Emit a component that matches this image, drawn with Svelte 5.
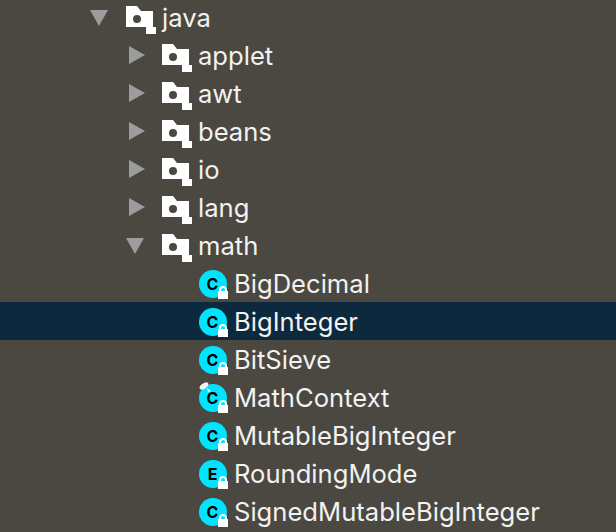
<script>
	const rows = [
		{ name: 'java', depth: 0, kind: 'folder', arrow: 'open' },
		{ name: 'applet', depth: 1, kind: 'folder', arrow: 'closed' },
		{ name: 'awt', depth: 1, kind: 'folder', arrow: 'closed' },
		{ name: 'beans', depth: 1, kind: 'folder', arrow: 'closed' },
		{ name: 'io', depth: 1, kind: 'folder', arrow: 'closed' },
		{ name: 'lang', depth: 1, kind: 'folder', arrow: 'closed' },
		{ name: 'math', depth: 1, kind: 'folder', arrow: 'open' },
		{ name: 'BigDecimal', depth: 2, kind: 'class', letter: 'C' },
		{ name: 'BigInteger', depth: 2, kind: 'class', letter: 'C', selected: true },
		{ name: 'BitSieve', depth: 2, kind: 'class', letter: 'C' },
		{ name: 'MathContext', depth: 2, kind: 'class', letter: 'C', pinned: true },
		{ name: 'MutableBigInteger', depth: 2, kind: 'class', letter: 'C' },
		{ name: 'RoundingMode', depth: 2, kind: 'class', letter: 'E' },
		{ name: 'SignedMutableBigInteger', depth: 2, kind: 'class', letter: 'C' }
	];
</script>

<div class="tree">
	{#each rows as row}
		<div class="row depth-{row.depth}" class:selected={row.selected}>
			<span class="arrow">
				{#if row.arrow === 'open'}
					<svg class="open" width="18" height="16" viewBox="0 0 18 16"><path d="M0 0H18L9 16Z" fill="#9c9c9c" /></svg>
				{:else if row.arrow === 'closed'}
					<svg class="closed" width="16" height="18" viewBox="0 0 16 18"><path d="M0 0L16 9L0 18Z" fill="#9c9c9c" /></svg>
				{/if}
			</span>
			<span class="icon {row.kind}">
				{#if row.kind === 'folder'}
					<svg width="30" height="28" viewBox="0 0 30 28">
						<path d="M0 0H11L15 5H27V21H30V28H20V21H0Z" fill="#fff" />
						<circle cx="11" cy="13" r="4" fill="#4b4842" />
					</svg>
				{:else}
					<svg width="32" height="32" viewBox="0 0 32 32">
						<circle cx="14" cy="16" r="14" fill="#00e5ff" />
						<text x="13.5" y="21.8" text-anchor="middle" class="letter">{row.letter}</text>
						{#if row.pinned}
							<ellipse cx="5" cy="4" rx="5" ry="2.6" transform="rotate(-35 5 4)" fill="#f4f4f4" />
							<path d="M8 6L12 9L9 10Z" fill="#fff" />
						{/if}
						<path d="M21 23V22a3 3 0 0 1 6 0V23" fill="none" stroke="#fff" stroke-width="2" />
						<rect x="19" y="23" width="10" height="8" fill="#fff" />
					</svg>
				{/if}
			</span>
			<span class="name">{row.name}</span>
		</div>
	{/each}
</div>

<style>
	:global(body) {
		margin: 0;
		background: #4b4842;
	}

	.tree {
		height: 532px;
		overflow: hidden;
		margin-top: -2px;
		background: #4b4842;
		font-family: Inter, "Liberation Sans", sans-serif;
		font-size: 25.6px;
		color: #f2f2f0;
	}

	.row {
		display: flex;
		align-items: center;
		height: 38px;
	}

	.row.selected {
		background: #0d293e;
	}

	.depth-0 {
		padding-left: 90px;
	}

	.depth-1 {
		padding-left: 126px;
	}

	.depth-2 {
		padding-left: 162px;
	}

	.arrow {
		display: flex;
		align-items: center;
		width: 36px;
		flex: none;
	}

	.arrow .open {
		margin-top: 2px;
	}

	.arrow .closed {
		margin-left: 3px;
	}

	.icon {
		display: flex;
		align-items: center;
		width: 36px;
		flex: none;
	}

	.icon.folder {
		padding-top: 6px;
	}

	.icon.class {
		padding-top: 2px;
	}

	.icon.class svg {
		margin-left: 1px;
	}

	.letter {
		font-family: Inter, "Liberation Sans", sans-serif;
		font-size: 16px;
		font-weight: 700;
		fill: #000;
	}

	.name {
		white-space: nowrap;
	}
</style>
